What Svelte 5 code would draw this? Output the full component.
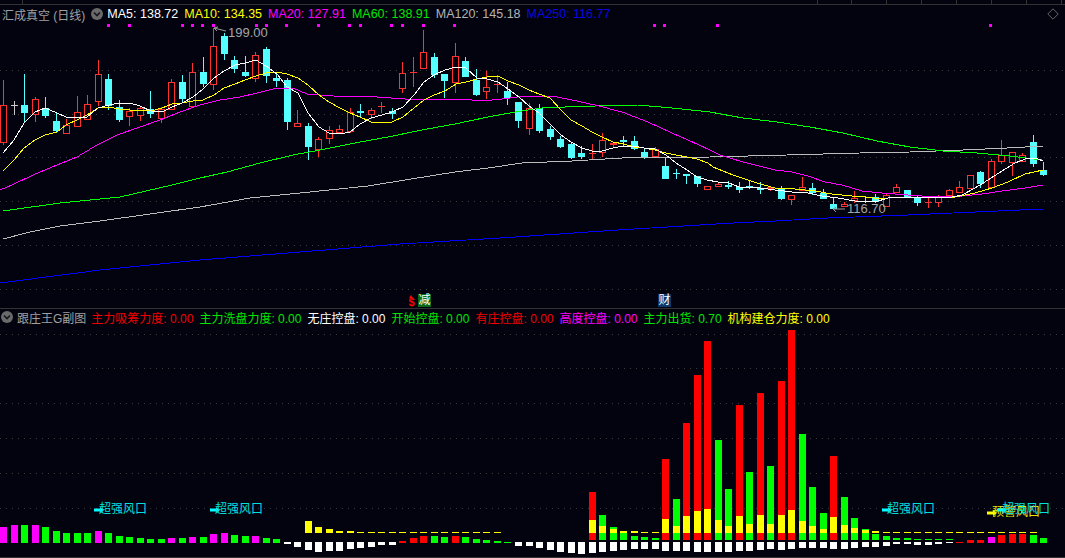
<script>
  const candleW = 10.51;

  // [bodyTop, bodyBottom, high, low, kind]  r=red hollow, c=cyan, g=grey
  const candles = [
    [105,143,80,145,'r'],[105,106,101,115,'g'],[105,113,74,122,'c'],[99,115,97,122,'r'],[108,116,97,118,'c'],
    [121,131,113,132,'c'],[125,134,119,134,'r'],[112,127,96,127,'r'],[104,120,95,120,'r'],[74,102,60,106,'r'],
    [79,106,74,110,'c'],[107,120,100,122,'c'],[111,117,108,126,'r'],[108,116,107,121,'r'],[109,114,91,118,'c'],
    [109,119,107,123,'r'],[82,110,79,110,'r'],[82,99,75,102,'c'],[72,107,63,108,'r'],[72,84,57,87,'c'],
    [46,85,28,90,'r'],[36,54,33,60,'c'],[60,69,56,73,'c'],[72,76,56,77,'c'],[55,79,52,82,'r'],
    [49,76,47,83,'c'],[78,81,72,87,'c'],[80,122,78,130,'c'],[123,127,110,127,'r'],[126,147,123,160,'c'],
    [139,150,137,157,'r'],[130,139,126,144,'r'],[129,133,125,134,'r'],[112,132,108,133,'r'],[111,113,104,117,'c'],
    [110,115,108,119,'r'],[106,107,102,113,'r'],[111,114,108,119,'c'],[73,89,62,93,'r'],[72,73,57,87,'r'],
    [52,69,30,69,'r'],[57,75,53,78,'c'],[74,81,74,98,'c'],[56,83,43,93,'r'],[61,77,57,77,'c'],
    [80,95,69,96,'c'],[87,92,71,99,'r'],[84,85,75,93,'r'],[91,98,82,105,'c'],[102,121,102,128,'c'],
    [108,129,103,135,'r'],[108,131,104,133,'c'],[129,137,126,140,'c'],[139,147,136,148,'c'],[144,158,142,159,'c'],
    [153,157,146,159,'c'],[153,154,144,160,'r'],[140,153,133,157,'r'],[143,145,142,148,'r'],[140,142,136,146,'c'],
    [141,149,136,150,'c'],[152,157,149,159,'c'],[149,157,147,157,'r'],[166,179,157,179,'c'],[173,174,169,179,'c'],
    [174,176,174,184,'c'],[176,184,176,187,'c'],[186,190,186,190,'r'],[184,187,183,187,'r'],[185,187,181,189,'c'],
    [187,190,182,193,'c'],[186,188,180,189,'c'],[188,190,182,194,'c'],[187,189,187,191,'r'],[188,199,186,200,'c'],
    [195,200,195,205,'r'],[187,191,177,191,'r'],[188,193,183,195,'c'],[193,199,189,199,'c'],[204,209,197,209,'c'],
    [204,207,202,207,'r'],[198,201,191,203,'r'],[201,202,196,203,'c'],[197,202,194,203,'c'],[195,207,194,207,'r'],
    [187,193,184,193,'r'],[190,198,190,198,'c'],[197,203,196,206,'c'],[202,203,198,208,'r'],[196,203,195,207,'r'],
    [190,196,189,196,'r'],[187,193,181,193,'r'],[175,189,175,189,'r'],[172,184,171,188,'c'],[161,188,159,188,'r'],
    [155,162,140,164,'r'],[152,163,152,176,'r'],[155,162,153,162,'r'],[142,164,135,167,'c'],[170,175,162,176,'c']
  ];

  const averages = [
    { cls: 'ma250', pts: '0,283 100,270 200,260 300,252 400,244 500,238 618,230 667,227 733,223 775,221 828,218 908,215 975,212 1043,209' },
    { cls: 'ma120', pts: '3,239 30,232 60,226 100,221 150,214 200,207 250,198 300,193 368,186 405,180 455,172 488,168 522,163 572,161 622,158 710,157 787,155 860,153 910,152 963,150 1007,148 1043,146' },
    { cls: 'ma60', pts: '3,211 60,203 120,197 172,185 200,178 227,172 260,163 293,155 320,150 355,143 388,137 422,130 455,124 488,117 515,112 542,108 565,107 595,106 638,105 672,108 710,112 743,118 777,122 810,127 843,133 877,141 910,147 943,151 977,153 1010,156 1042,160' },
    { cls: 'ma20', pts: '0,190 12,185 33,175 57,165 77,157 97,145 117,135 140,127 160,120 180,112 200,105 220,100 240,97 257,93 277,88 293,88 307,94 333,96 377,97 405,99 432,99 462,99 482,101 502,99 525,96 552,96 572,100 595,105 622,112 648,122 672,133 688,140 710,150 720,155 743,162 775,170 792,172 808,176 825,182 842,185 862,191 882,193 908,195 935,197 962,196 982,194 1002,191 1025,188 1043,185' },
    { cls: 'ma10', pts: '3,171 14,160 24,148 35,140 45,135 57,132 66,125 77,120 87,115 98,108 109,107 119,109 130,110 140,110 151,111 162,108 172,104 182,103 193,101 203,100 214,95 224,88 235,84 245,80 256,76 266,73 277,72 287,74 298,78 308,85 319,95 329,102 340,108 350,113 360,117 371,122 382,123 392,122 403,117 414,108 424,100 434,95 445,91 456,84 466,82 477,79 487,77 498,76 508,81 519,85 529,90 539,94 550,98 561,110 571,120 582,126 592,132 602,137 613,142 624,144 634,147 644,148 655,150 666,153 676,155 687,157 697,159 708,163 713,167 733,175 757,183 775,188 795,189 815,191 832,194 852,196 865,197 882,199 895,197 915,197 938,198 955,197 975,193 992,188 1008,182 1025,174 1043,170' },
    { cls: 'ma5', pts: '3,153 14,140 24,123 35,112 45,108 57,113 66,117 77,117 87,117 98,108 109,105 119,103 130,103 140,106 151,111 162,112 172,107 182,103 193,97 203,89 214,78 224,71 235,65 245,63 256,60 266,66 277,74 287,87 298,93 308,113 319,127 329,133 340,134 350,132 360,124 371,118 382,115 392,112 403,107 414,95 424,82 434,75 445,70 456,67 466,68 477,78 487,79 498,82 508,89 519,97 529,106 539,113 550,124 561,135 571,142 582,148 592,151 602,151 613,148 624,146 634,146 644,148 655,149 666,155 676,163 687,170 697,177 707,180 718,182 729,183 739,187 750,187 760,188 775,190 792,192 808,193 822,196 838,198 855,201 875,202 888,198 902,197 918,197 938,198 952,197 962,195 975,188 988,180 1002,171 1015,163 1028,158 1038,159 1043,161' }
  ];

  const signalDots = [108,129,182,192,202,213,256,266,286,318,349,360,391,402,423,454,654,664,717,990];
  const mainGrid = [70,114,157,201,245,289];
  const subGrid = [334,368,403,438,473,508];
  const rulerTicks = [22,817,851,886,921,956,991,1026,1061];

  const mainLegend = [
    { name: 'MA5', value: '138.72', cls: 'white' },
    { name: 'MA10', value: '134.35', cls: 'yellow' },
    { name: 'MA20', value: '127.91', cls: 'magenta' },
    { name: 'MA60', value: '138.91', cls: 'green' },
    { name: 'MA120', value: '145.18', cls: 'grey' },
    { name: 'MA250', value: '116.77', cls: 'blue' }
  ];
  const subLegend = [
    { name: '主力吸筹力度', value: '0.00', cls: 'red' },
    { name: '主力洗盘力度', value: '0.00', cls: 'green' },
    { name: '无庄控盘', value: '0.00', cls: 'white' },
    { name: '开始控盘', value: '0.00', cls: 'green' },
    { name: '有庄控盘', value: '0.00', cls: 'red' },
    { name: '高度控盘', value: '0.00', cls: 'magenta' },
    { name: '主力出货', value: '0.70', cls: 'green' },
    { name: '机构建仓力度', value: '0.00', cls: 'yellow' }
  ];

  const R = '#ff0000', G = '#00ff00', Y = '#ffff00', M = '#ff00ff';

  // low bars that stand on y=543, from index 0
  const lowBars = {
    0:[M,527],1:[M,525],2:[G,525],3:[M,525],4:[G,527],5:[G,531],6:[G,533],7:[G,533],8:[G,533],9:[M,531],
    10:[G,533],11:[G,536],12:[G,537],13:[G,538],14:[G,539],15:[G,539],16:[M,538],17:[G,538],18:[M,537],19:[G,537],
    20:[M,534],21:[M,533],22:[G,535],23:[G,536],24:[M,536],25:[G,538],26:[G,539],
    38:[R,541],39:[R,538],40:[R,536],41:[G,536],42:[G,537],43:[R,536],44:[G,537],45:[G,539],46:[G,540],47:[G,541],48:[G,542],
    91:[R,542],92:[R,540],93:[R,540],94:[M,537],95:[R,535],96:[R,534],97:[R,534],98:[G,535],99:[G,538]
  };
  const whiteBars = {
    27:544,28:547,29:550,30:552,31:551,32:551,33:549,34:548,35:547,36:545,37:545,
    49:546,50:546,51:548,52:550,53:552,54:553,55:554,56:553,57:552,58:551,59:550,60:549,61:549,62:549,
    63:551,64:551,65:551,66:552,67:552,68:552,69:552,70:551,71:551,72:550,73:549,74:550,75:549,76:548,77:548,78:548,
    79:549,80:549,81:548,82:547,83:547,84:546,85:544,86:544,87:545,88:545,89:544,90:543
  };
  // index: [base colour, top of upper block, top of yellow]
  const stacks = {
    56:[R,492,520],57:[G,515,526],58:[G,527,529],63:[R,459,519],64:[G,499,526],65:[R,423,516],66:[R,375,511],67:[R,341,509],
    68:[G,440,520],69:[G,489,526],70:[R,405,516],71:[G,472,524],72:[R,393,515],73:[G,466,524],74:[R,381,515],75:[R,330,510],
    76:[G,434,521],77:[G,487,526],78:[G,513,529],79:[R,456,517],80:[G,497,525],81:[G,518,528],82:[G,529,530]
  };
  // green bars sitting on y=540
  const shortBars = { 59:533,60:536,61:537,62:538,83:534,84:536,85:538,86:538,87:539,88:539,89:539,90:539 };
  // plain yellow blocks ending at y=533
  const yellowBars = { 29:521,30:527,31:529,32:531,33:531,59:531,60:531,83:531 };
  const dashes = [
    34,35,36,37,38,39,40,41,42,43,44,45,46,47,61,62,84,85,86,87,88,89,90,91,92,93,94,95,96,97,98
  ];

  const labels = [
    { x: 94, y: 510, text: '超强风口', cls: 'tag-cyan' },
    { x: 210, y: 510, text: '超强风口', cls: 'tag-cyan' },
    { x: 882, y: 510, text: '超强风口', cls: 'tag-cyan' },
    { x: 987, y: 513, text: '预警风口', cls: 'tag-yellow' },
    { x: 997, y: 510, text: '超强风口', cls: 'tag-cyan' }
  ];

  const barX = (i) => Math.round(candleW * i);
</script>

<div class="terminal">
  <section class="pane main-pane">
    <svg class="plot" viewBox="0 0 1065 308" aria-hidden="true">
      {#each mainGrid as y}
        <line class="grid" x1="0" x2="1065" y1={y} y2={y} />
      {/each}
      {#each rulerTicks as x}
        <rect class="tick" x={x} y="0" width="1" height="4" />
      {/each}

      {#each signalDots as x}
        <rect class="dot" x={x - 1} y="24" width="3" height="3" />
      {/each}

      {#each candles as [top, bottom, high, low, kind], i}
        <rect class="body-{kind}" x={barX(i) + 3} y={high} width="1" height={low - high} />
        {#if kind === 'r' && bottom - top > 2}
          <rect class="hollow" x={barX(i) + 0.5} y={top + 0.5} width="6" height={bottom - top - 1} />
        {:else}
          <rect class="body-{kind}" x={barX(i)} y={top} width="7" height={Math.max(bottom - top, 1)} />
        {/if}
      {/each}

      {#each averages as line}
        <polyline class="avg {line.cls}" points={line.pts} />
      {/each}

      <path class="pointer" d="M214 28 L226 31 M214 28 l4 -1 M214 28 l3 3" />
      <text class="price" x="228" y="37">199.00</text>
      <path class="pointer" d="M833 209 H845 M833 209 l3 -2 M833 209 l3 3" />
      <text class="price" x="847" y="213">116.70</text>
    </svg>

    <div class="ruler"></div>
    <div class="legend main-legend">
      <span class="title">汇成真空 (日线)</span>
      <svg class="toggle" viewBox="0 0 12 12" aria-hidden="true">
        <circle cx="6" cy="6" r="6" />
        <path d="M3 4.5 L6 7.5 L9 4.5" />
      </svg>
      {#each mainLegend as item}
        <span class="item {item.cls}">{item.name}: {item.value}</span>
      {/each}
    </div>

    <svg class="corner" viewBox="0 0 12 12" aria-hidden="true">
      <path d="M6 .8 L11.2 6 L6 11.2 L.8 6 Z" />
    </svg>

    <span class="event dollar">$</span>
    <span class="event reduce">减</span>
    <span class="event finance">财</span>
  </section>

  <section class="pane sub-pane">
    <svg class="plot" viewBox="0 309 1065 248" aria-hidden="true">
      {#each subGrid as y}
        <line class="grid" x1="0" x2="1065" y1={y} y2={y} />
      {/each}

      {#each Object.entries(lowBars) as [i, [color, top]]}
        <rect x={barX(+i)} y={top} width="7" height={543 - top} fill={color} />
      {/each}
      {#each Object.entries(whiteBars) as [i, bottom]}
        <rect class="white-bar" x={barX(+i)} y="542" width="7" height={bottom - 542} />
      {/each}
      {#each Object.entries(shortBars) as [i, top]}
        <rect x={barX(+i)} y={top} width="7" height={540 - top} fill={G} />
      {/each}
      {#each Object.entries(yellowBars) as [i, top]}
        <rect x={barX(+i)} y={top} width="7" height={533 - top} fill={Y} />
      {/each}
      {#each Object.entries(stacks) as [i, [color, top, mid]]}
        <rect x={barX(+i)} y={top} width="7" height={mid - top} fill={color} />
        <rect x={barX(+i)} y={mid} width="7" height={533 - mid} fill={Y} />
        <rect x={barX(+i)} y="533" width="7" height="7" fill={color} />
      {/each}
      {#each dashes as i}
        <rect x={barX(i)} y="532" width="7" height="1" fill={Y} />
      {/each}

      {#each labels as tag}
        <g class={tag.cls}>
          <path class="arrow" d="M{tag.x} {tag.y - 1.5} H{tag.x + 6} V{tag.y - 3} L{tag.x + 10} {tag.y} L{tag.x + 6} {tag.y + 3} V{tag.y + 1.5} H{tag.x} Z" />
          <text x={tag.x + 5} y={tag.y + 3}>{tag.text}</text>
        </g>
      {/each}
    </svg>

    <div class="legend sub-legend">
      <svg class="toggle" viewBox="0 0 12 12" aria-hidden="true">
        <circle cx="6" cy="6" r="6" />
        <path d="M3 4.5 L6 7.5 L9 4.5" />
      </svg>
      <span class="title">跟庄王G副图</span>
      {#each subLegend as item}
        <span class="item {item.cls}">{item.name}: {item.value}</span>
      {/each}
    </div>
  </section>
</div>

<style>
  :global(body) {
    margin: 0;
    background: #03030f;
  }

  .terminal {
    width: 1065px;
    height: 558px;
    display: flex;
    flex-direction: column;
    box-sizing: border-box;
    overflow: hidden;
    background: #03030f;
    border-bottom: 1px solid #333;
    font-family: 'Liberation Sans', 'Noto Sans CJK SC', sans-serif;
  }

  .pane {
    position: relative;
  }

  .main-pane {
    height: 309px;
    box-sizing: border-box;
    border-bottom: 1px solid #333;
  }

  .sub-pane {
    flex: 1;
  }

  .plot {
    position: absolute;
    top: 0;
    left: 0;
    width: 1065px;
    height: 100%;
  }

  .ruler {
    height: 4px;
    border-bottom: 1px solid #333;
  }

  .legend {
    position: relative;
    display: flex;
    align-items: center;
    white-space: nowrap;
  }

  .main-legend {
    height: 18px;
    padding-left: 2px;
    font-size: 12.5px;
  }

  .sub-legend {
    height: 16px;
    padding-left: 1px;
    font-size: 12px;
  }

  .title {
    color: #a0a0a0;
  }

  .main-legend .title {
    font-size: 12px;
  }

  .toggle {
    width: 12px;
    height: 12px;
    flex: none;
  }

  .toggle circle {
    fill: #6a6a6a;
  }

  .toggle path {
    fill: none;
    stroke: #15151c;
    stroke-width: 1.6;
  }

  .main-legend .toggle {
    margin: 0 4px 0 6px;
  }

  .sub-legend .toggle {
    margin-right: 4px;
  }

  .main-legend .item {
    margin-right: 6px;
  }

  .sub-legend .item {
    margin-left: 6px;
  }

  .sub-legend .title {
    margin-right: -1px;
  }

  .white { color: #fff; }
  .yellow { color: #ffff00; }
  .magenta { color: #ff00ff; }
  .green { color: #00e600; }
  .grey { color: #b4b4b4; }
  .blue { color: #0808e0; }
  .red { color: #f00000; }

  .corner {
    position: absolute;
    top: 8px;
    right: 6px;
    width: 12px;
    height: 12px;
  }

  .corner path {
    fill: none;
    stroke: #666;
  }

  .event {
    position: absolute;
    top: 294px;
    width: 13px;
    height: 13px;
    line-height: 13px;
    font-size: 12px;
    text-align: center;
    color: #fff;
  }

  .dollar {
    left: 405px;
    font-weight: bold;
    color: #f00;
    line-height: 16px;
    font-size: 11px;
  }

  .dollar::before {
    content: '';
    position: absolute;
    left: 4px;
    top: 1px;
    border-left: 2.5px solid transparent;
    border-right: 2.5px solid transparent;
    border-bottom: 3px solid #f00;
  }

  .reduce {
    left: 418px;
    background: #0a6a14;
  }

  .finance {
    left: 658px;
    background: #0a3a6c;
  }

  .grid {
    stroke: #3c3c3c;
    stroke-width: 1;
    stroke-dasharray: 1 5;
    shape-rendering: crispEdges;
  }

  .tick {
    fill: #333;
  }

  .dot {
    fill: #ff00ff;
  }

  .plot rect {
    shape-rendering: crispEdges;
  }

  .body-r { fill: #ff3232; }
  .body-c { fill: #54ffff; }
  .body-g { fill: #c8c8c8; }

  .hollow {
    fill: #03030f;
    stroke: #ff3232;
    stroke-width: 1;
  }

  .avg {
    fill: none;
    stroke-width: 1;
    shape-rendering: crispEdges;
    stroke-linejoin: round;
  }

  .ma5 { stroke: #fff; }
  .ma10 { stroke: #ffff00; }
  .ma20 { stroke: #ff00ff; }
  .ma60 { stroke: #00ff00; }
  .ma120 { stroke: #bcbcbc; }
  .ma250 { stroke: #0000ff; }

  .pointer {
    fill: none;
    stroke: #9a9a9a;
    stroke-width: 1;
  }

  .price {
    font-size: 13px;
    fill: #a6a6a6;
  }

  .white-bar {
    fill: #fff;
  }

  .tag-cyan text,
  .tag-yellow text {
    font-size: 12px;
  }

  .tag-cyan .arrow { fill: #00ffff; }
  .tag-cyan text { fill: #00e0e0; }
  .tag-yellow .arrow { fill: #ffff00; }
  .tag-yellow text { fill: #e6e600; }
</style>
